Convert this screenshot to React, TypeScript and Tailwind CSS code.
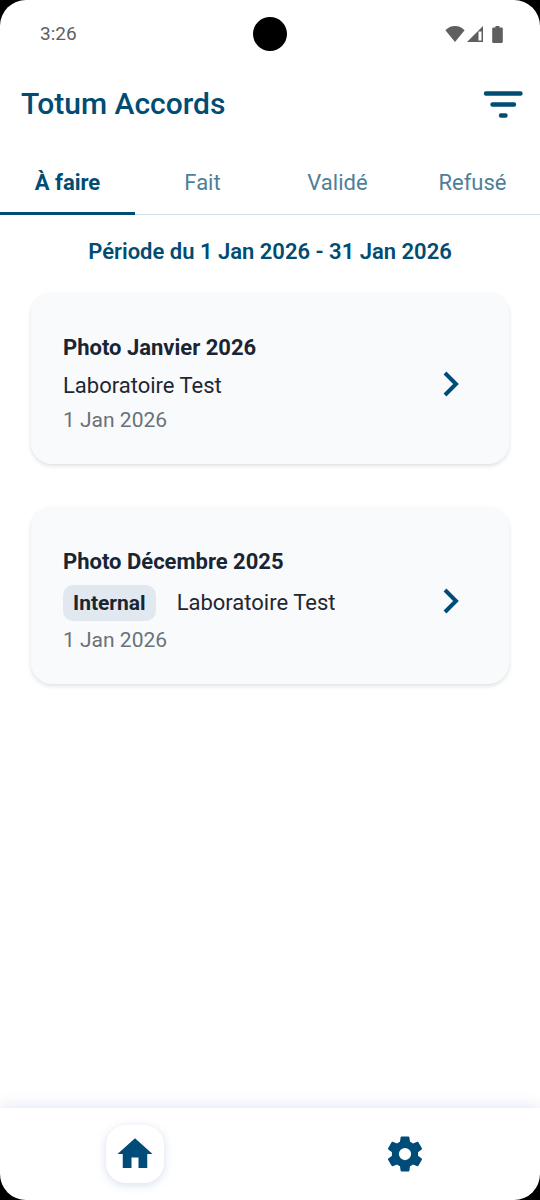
import { useState } from "react";
import { MdHome } from "react-icons/md";

const tabs = ["À faire", "Fait", "Validé", "Refusé"];

type Agreement = {
  title: string;
  lab: string;
  date: string;
  internal?: boolean;
};

const agreements: Agreement[] = [
  { title: "Photo Janvier 2026", lab: "Laboratoire Test", date: "1 Jan 2026" },
  { title: "Photo Décembre 2025", lab: "Laboratoire Test", date: "1 Jan 2026", internal: true },
];

function StatusBar() {
  return (
    <div className="grid h-[68px] grid-cols-3 items-center px-9 text-[#5f5f5f]">
      <span className="pl-1 text-[19px] leading-6">3:26</span>
      <span className="size-[34px] justify-self-center rounded-full bg-black" />
      <span className="flex items-center justify-self-end pr-px">
        <svg className="h-4 w-[20px]" viewBox="0 0 20 16" fill="currentColor" aria-hidden="true">
          <path d="M10 16 .4 4.2C3 1.6 6.300 0 10 0s7 1.600 9.600 4.200z" />
        </svg>
        <svg className="ml-[2px] h-4 w-4" viewBox="0 0 16 16" fill="currentColor" aria-hidden="true">
          <path fillRule="evenodd" d="M16 0v16H0zM11.500 5.500V14.600h3V5.500z" />
        </svg>
        <svg className="ml-[9px] h-[17px] w-[11px]" viewBox="0 0 11 17" fill="currentColor" aria-hidden="true">
          <path d="M3.500 0h4v1.500H9.500a1.300 1.300 0 0 1 1.300 1.300V15.700A1.300 1.300 0 0 1 9.500 17h-8A1.300 1.300 0 0 1 .2 15.700V2.800A1.300 1.300 0 0 1 1.500 1.500h2z" />
        </svg>
      </span>
    </div>
  );
}

function CogIcon() {
  return (
    <svg className="size-[42px]" viewBox="0 0 24 24" fill="currentColor" aria-hidden="true">
      <path d="M12 15.5A3.5 3.5 0 0 1 8.500 12 3.5 3.5 0 0 1 12 8.500a3.5 3.5 0 0 1 3.500 3.500 3.5 3.5 0 0 1-3.500 3.500m7.430-2.530c.04-.32.07-.64.07-.97s-.03-.66-.07-1l2.110-1.630c.19-.15.24-.42.12-.64l-2-3.460c-.12-.22-.39-.31-.61-.22l-2.490 1c-.52-.39-1.060-.73-1.690-.98l-.37-2.650A.506.506 0 0 0 14 2h-4c-.25 0-.46.18-.5.42l-.37 2.650c-.63.25-1.170.59-1.690.98l-2.490-1c-.22-.09-.49 0-.61.22l-2 3.460c-.13.22-.07.49.12.64L4.570 11c-.04.34-.07.67-.07 1s.03.65.07.97l-2.110 1.660c-.19.15-.25.42-.12.64l2 3.460c.12.22.39.3.61.22l2.490-1.010c.52.4 1.060.74 1.690.99l.37 2.650c.04.24.25.42.5.42h4c.25 0 .46-.18.5-.42l.37-2.650c.63-.26 1.170-.59 1.690-.99l2.490 1.010c.22.08.49 0 .61-.22l2-3.460c.12-.22.07-.49-.12-.64z" />
    </svg>
  );
}

function AgreementCard({ title, lab, date, internal }: Agreement) {
  return (
    <li>
      <a
        href="#"
        className="flex items-center justify-between rounded-[21px] bg-[#f9fafc] pt-10 pr-10 pb-[30px] pl-8 shadow-[0_2px_4px_rgba(15,40,60,0.14)]"
      >
        <div className="flex flex-col">
          <h2 className="text-[22px] leading-[30px] font-bold text-[#1a2534]">{title}</h2>
          <p className="mt-2 flex min-h-[30px] items-center gap-[21px] text-[22px] leading-7 text-[#1f2733]">
            {internal && (
              <span className="rounded-[10px] bg-[#e2e8f0] px-[10px] py-1 text-[21px] font-bold text-[#1a2534]">
                Internal
              </span>
            )}
            {lab}
          </p>
          <p className="mt-[5px] text-[21px] leading-7 text-[#6a7178]">{date}</p>
        </div>
        <svg className="size-9" viewBox="0 0 36 36" fill="none" stroke="#004c78" strokeWidth="4" aria-hidden="true">
          <path d="m12 7 11 11-11 11" />
        </svg>
      </a>
    </li>
  );
}

export default function App() {
  const [active, setActive] = useState(0);

  return (
    <div className="min-h-screen bg-black font-['Roboto',sans-serif]">
      <div className="flex min-h-screen flex-col overflow-hidden rounded-[26px] bg-white">
        <StatusBar />
        <header className="flex h-[72px] items-center justify-between pr-4 pl-[21px]">
          <h1 className="text-[30px] leading-9 font-medium text-[#004c73]">Totum Accords</h1>
          <button type="button" aria-label="Filtrer">
            <svg
              className="h-[30px] w-[42px]"
              viewBox="0 0 42 30"
              fill="none"
              stroke="#004c73"
              strokeWidth="4.400"
              strokeLinecap="round"
              aria-hidden="true"
            >
              <path d="M4 4.500h34.500M10.500 15.500h21.500M19 26.500h4.500" />
            </svg>
          </button>
        </header>
        <nav className="mt-[10px] grid h-[65px] grid-cols-4 border-b border-[#d5e3e9]">
          {tabs.map((tab, i) => (
            <button
              key={tab}
              type="button"
              onClick={() => setActive(i)}
              className={
                i === active
                  ? "-mb-px border-b-3 border-[#004c73] pt-[2px] text-[22px] font-bold text-[#004c73]"
                  : "-mb-px border-b-3 border-transparent pt-[2px] text-[22px] text-[#4d7f99]"
              }
            >
              {tab}
            </button>
          ))}
        </nav>
        <main className="flex-1 px-[31px] pt-[21px]">
          <p className="text-center text-[22px] leading-8 font-semibold text-[#004c73]">
            Période du 1 Jan 2026 - 31 Jan 2026
          </p>
          <ul className="mt-[25px] flex flex-col gap-[43px]">
            {agreements.map((item) => (
              <AgreementCard key={item.title} {...item} />
            ))}
          </ul>
        </main>
        <nav className="grid h-[92px] grid-cols-2 place-items-center shadow-[0_-2px_14px_rgba(30,80,160,0.13)]">
          <a
            href="#"
            aria-label="Accueil"
            className="grid size-[58px] place-items-center rounded-[20px] bg-white text-[#004c78] shadow-[0_2px_10px_rgba(30,80,160,0.18)]"
          >
            <MdHome className="size-[42px]" />
          </a>
          <a href="#" aria-label="Paramètres" className="grid size-[58px] place-items-center text-[#004c78]">
            <CogIcon />
          </a>
        </nav>
      </div>
    </div>
  );
}
